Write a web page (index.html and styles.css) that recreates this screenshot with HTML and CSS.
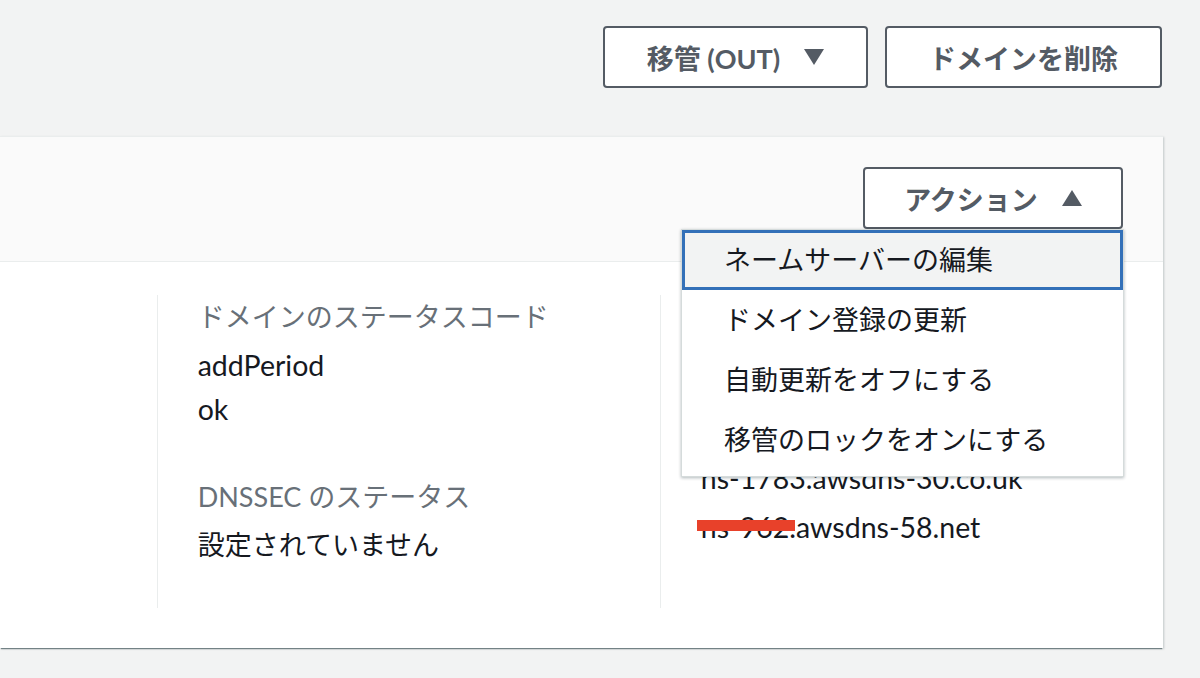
FILE: index.html
```html
<!DOCTYPE html>
<html lang="ja">

<head>
    <meta charset="UTF-8">
    <meta name="viewport" content="width=device-width, initial-scale=1.0">
    <title>ドメインの詳細</title>
    <link rel="stylesheet" href="styles.css">
</head>

<body>
    <div class="page">
        <!-- 上部ボタン -->
        <div class="top-actions">
            <button class="btn">移管 (OUT)
                <svg class="caret" width="20" height="16" viewBox="0 0 20 16"><polygon points="0,0 20,0 10,16" /></svg>
            </button>
            <button class="btn">ドメインを削除</button>
        </div>

        <div class="card">
            <div class="card-header">
                <div class="dropdown">
                    <button class="btn btn-small">アクション
                        <svg class="caret" width="20" height="16" viewBox="0 0 20 16"><polygon points="0,16 20,16 10,0" /></svg>
                    </button>
                    <ul class="menu">
                        <li class="active">ネームサーバーの編集</li>
                        <li>ドメイン登録の更新</li>
                        <li>自動更新をオフにする</li>
                        <li>移管のロックをオンにする</li>
                    </ul>
                </div>
            </div>

            <div class="card-body">
                <div class="col col-first"></div>
                <div class="col">
                    <div class="label">ドメインのステータスコード</div>
                    <div class="value en">addPeriod</div>
                    <div class="value en">ok</div>
                    <div class="label group">DNSSEC のステータス</div>
                    <div class="value">設定されていません</div>
                </div>
                <div class="col">
                    <div class="label">ネームサーバー</div>
                    <div class="ns-list">
                        <div class="value en ns">ns-1361.awsdns-42.org</div>
                        <div class="value en ns">ns-223.awsdns-27.com</div>
                        <div class="value en ns">ns-1783.awsdns-30.co.uk</div>
                        <div class="value en ns">ns-962.awsdns-58.net<span class="redact"></span></div>
                    </div>
                </div>
            </div>
        </div>
    </div>
</body>

</html>
```

FILE: styles.css
```css
body {
    margin: 0;
    padding: 0;
    background-color: #f2f3f3;
    font-family: "Lato", "Noto Sans CJK JP", sans-serif;
    font-size: 27px;
    color: #16191f;
}

.page {
    width: 1200px;
    height: 678px;
    overflow: hidden;
}

.top-actions {
    display: flex;
    justify-content: flex-end;
    gap: 17px;
    padding: 26px 38px 0 0;
}

.btn {
    display: flex;
    align-items: center;
    justify-content: center;
    gap: 24px;
    height: 62px;
    padding: 0 38px;
    background: white;
    border: 2px solid #545b64;
    border-radius: 4px;
    color: #545b64;
    font-family: "Lato", "Noto Sans CJK JP", sans-serif;
    font-size: 27px;
    font-weight: bold;
}

.top-actions .btn:first-child {
    width: 265px;
}

.top-actions .btn:last-child {
    width: 277px;
}

.caret {
    fill: #545b64;
}

.card {
    margin-top: 48px;
    width: 1163px;
    background: white;
    box-shadow: 0 2px 1px -1px rgba(0, 28, 36, 0.45), 1px 1px 2px 0 rgba(0, 28, 36, 0.2);
}

.card-header {
    height: 126px;
    background: #fafafa;
    border-top: 1px solid #eaeded;
    border-bottom: 1px solid #eaeded;
    display: flex;
    justify-content: flex-end;
    padding: 30px 40px 0 0;
    box-sizing: border-box;
}

.dropdown {
    position: relative;
}

.btn-small {
    width: 260px;
}

.menu {
    position: absolute;
    top: 62px;
    right: -1px;
    width: 443px;
    margin: 0;
    padding: 0 0 6px 0;
    list-style: none;
    background: white;
    border: 1px solid #d5dbdb;
    box-shadow: 0 1px 3px rgba(0, 28, 36, 0.3);
    z-index: 2;
    box-sizing: border-box;
}

.menu li {
    height: 60px;
    line-height: 60px;
    padding-left: 42px;
    color: #16191f;
    box-sizing: border-box;
}

.menu li.active {
    background: #f2f3f3;
    border: 3px solid #3370b8;
    line-height: 54px;
    padding-left: 39px;
}

.card-body {
    display: flex;
    padding: 33px 0 40px 0;
}

.col {
    height: 313px;
    border-left: 1px solid #eaeded;
    padding-left: 40px;
    width: 463px;
}

.col-first {
    width: 157px;
    padding: 0;
    border: none;
}

.label {
    color: #687078;
    line-height: 44px;
}

.label.group {
    margin-top: 44px;
}

.value {
    line-height: 44px;
}

/* 英字だけの値は少し大きめ */
.value.en {
    font-size: 28.5px;
}

.label + .value {
    margin-top: 4px;
}

.ns-list {
    margin-top: 19px;
}

.ns {
    position: relative;
    margin-bottom: 5px;
}

.redact {
    position: absolute;
    left: -4px;
    top: 15px;
    width: 98px;
    height: 11px;
    background: #e8412a;
}
```
